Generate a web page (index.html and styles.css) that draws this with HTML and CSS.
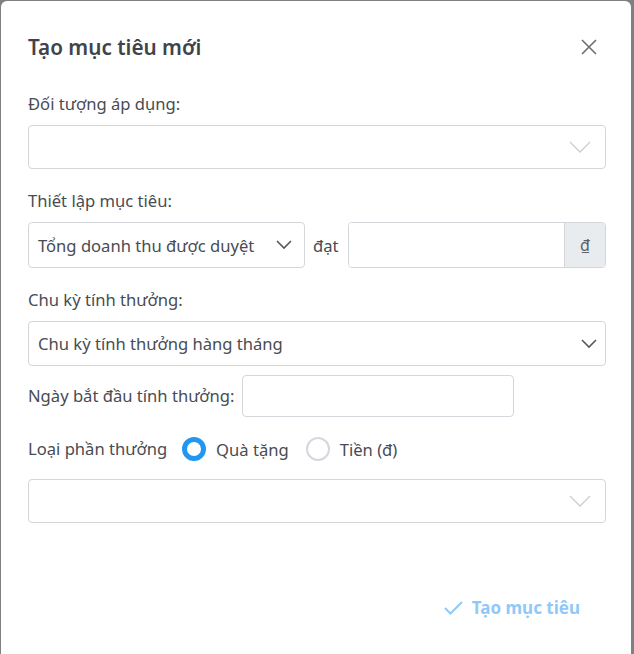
FILE: index.html
```html
<!DOCTYPE html>
<html lang="vi">
<head>
    <meta charset="UTF-8">
    <title>Tạo mục tiêu mới</title>
    <link rel="stylesheet" href="styles.css">
</head>
<body>
    <div class="modal">
        <!-- Header -->
        <div class="modal-header">
            <h1 class="modal-title">Tạo mục tiêu mới</h1>
            <span class="close">
                <svg width="16" height="16" viewBox="0 0 16 16"><path d="M1 1 L15 15 M15 1 L1 15" stroke="#6b6f75" stroke-width="1.6" fill="none"/></svg>
            </span>
        </div>

        <!-- Body -->
        <div class="modal-body">
            <div class="group">
                <label class="label">Đối tượng áp dụng:</label>
                <div class="select empty h44">
                    <span></span>
                    <svg class="chev light" width="22" height="12" viewBox="0 0 22 12"><path d="M1 1 L11 11 L21 1" stroke="#c9cdd2" stroke-width="1.3" fill="none"/></svg>
                </div>
            </div>

            <div class="group">
                <label class="label">Thiết lập mục tiêu:</label>
                <div class="target-row">
                    <div class="select small h46">
                        <span>Tổng doanh thu được duyệt</span>
                        <svg class="chev" width="16" height="10" viewBox="0 0 16 10"><path d="M1 1 L8 8 L15 1" stroke="#555a60" stroke-width="1.6" fill="none"/></svg>
                    </div>
                    <span class="dat">đạt</span>
                    <div class="input-group h46">
                        <input type="text" class="input">
                        <span class="addon">₫</span>
                    </div>
                </div>
            </div>

            <div class="group tight">
                <label class="label">Chu kỳ tính thưởng:</label>
                <div class="select h45">
                    <span>Chu kỳ tính thưởng hàng tháng</span>
                    <svg class="chev" width="16" height="10" viewBox="0 0 16 10"><path d="M1 1 L8 8 L15 1" stroke="#555a60" stroke-width="1.6" fill="none"/></svg>
                </div>
            </div>

            <div class="date-row">
                <span class="label">Ngày bắt đầu tính thưởng:</span>
                <input type="text" class="date-input">
            </div>

            <div class="reward-row">
                <span class="label">Loại phần thưởng</span>
                <span class="radio checked"></span>
                <span class="radio-text">Quà tặng</span>
                <span class="radio"></span>
                <span class="radio-text">Tiền (đ)</span>
            </div>

            <div class="select empty h44">
                <span></span>
                <svg class="chev light" width="22" height="12" viewBox="0 0 22 12"><path d="M1 1 L11 11 L21 1" stroke="#c9cdd2" stroke-width="1.3" fill="none"/></svg>
            </div>
        </div>

        <!-- Footer -->
        <div class="modal-footer">
            <button class="btn-create" disabled>
                <svg width="19" height="14" viewBox="0 0 19 14"><path d="M1 7 L6.5 12.5 L18 1" stroke="#90c9f9" stroke-width="2" fill="none"/></svg>
                Tạo mục tiêu
            </button>
        </div>
    </div>
</body>
</html>
```

FILE: styles.css
```css
body {
    margin: 0;
    background-color: #808080;
    font-family: 'Segoe UI', 'Noto Sans', sans-serif;
    color: #474c53;
    height: 654px;
    overflow: hidden;
}
.modal {
    margin: 1px 0 0 1px;
    width: 630px;
    height: 653px;
    background-color: #FFFFFF;
    border-radius: 6px 6px 0 0;
    box-sizing: border-box;
    padding: 0 25px 0 27px;
}
.modal-header {
    display: flex;
    justify-content: space-between;
    align-items: center;
    padding-top: 34px;
}
.modal-title {
    margin: 0;
    font-size: 20.7px;
    font-weight: 600;
    line-height: 24px;
    color: #3f444b;
}
.close {
    display: flex;
    margin-right: 9px;
}
.modal-body {
    padding-top: 33px;
}
.label {
    display: block;
    font-size: 16.6px;
    line-height: 24px;
    margin-bottom: 9px;
}
.group {
    margin-bottom: 20px;
}
.group.tight {
    margin-bottom: 9px;
}
.select {
    display: flex;
    align-items: center;
    justify-content: space-between;
    border: 1px solid #d3d6da;
    border-radius: 4px;
    box-sizing: border-box;
    padding: 0 8px 0 9px;
    font-size: 16.6px;
}
.select.empty {
    padding-right: 14px;
}
.h44 { height: 44px; }
.h45 { height: 45px; }
.h46 { height: 46px; }
.target-row {
    display: flex;
    align-items: center;
}
.select.small {
    width: 277px;
    padding-right: 12px;
}
.dat {
    font-size: 16.6px;
    margin: 0 9px 0 8px;
}
.input-group {
    display: flex;
    flex: 1;
    border: 1px solid #d3d6da;
    border-radius: 4px;
    box-sizing: border-box;
    overflow: hidden;
}
.input {
    flex: 1;
    border: none;
    outline: none;
    min-width: 0;
}
.addon {
    width: 40px;
    background-color: #e9ecef;
    border-left: 1px solid #d3d6da;
    display: flex;
    align-items: center;
    justify-content: center;
    font-size: 16px;
    color: #5a5f66;
}
.date-row {
    display: flex;
    align-items: center;
    margin-bottom: 20px;
}
.date-row .label {
    margin: 0 7px 0 0;
}
.date-input {
    width: 272px;
    height: 42px;
    box-sizing: border-box;
    border: 1px solid #d3d6da;
    border-radius: 4px;
    outline: none;
}
.reward-row {
    display: flex;
    align-items: center;
    margin-bottom: 18px;
}
.reward-row .label {
    margin: 0 15px 0 0;
}
.radio {
    width: 24px;
    height: 24px;
    box-sizing: border-box;
    border: 2px solid #d4d8dd;
    border-radius: 50%;
}
.radio.checked {
    border: 5px solid #2196f3;
}
.radio-text {
    font-size: 16.6px;
    margin: 0 17px 0 10px;
}
.modal-footer {
    display: flex;
    justify-content: flex-end;
    padding-top: 73px;
    padding-right: 26px;
}
.btn-create {
    display: flex;
    align-items: center;
    gap: 9px;
    background: none;
    border: none;
    padding: 0;
    font-family: inherit;
    font-size: 17px;
    font-weight: 700;
    color: #90c9f9;
    line-height: 24px;
}
```
